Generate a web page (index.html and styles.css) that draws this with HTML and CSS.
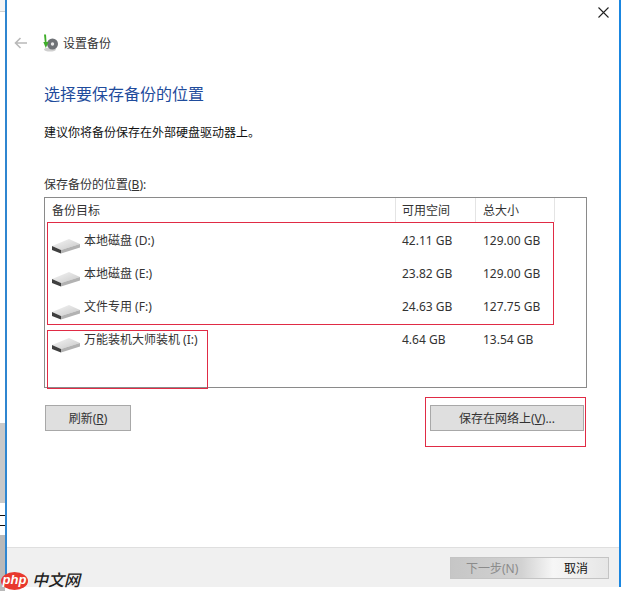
FILE: index.html
```html
<!DOCTYPE html>
<html lang="zh-CN">
<head>
<meta charset="utf-8">
<title>设置备份</title>
<link rel="stylesheet" href="styles.css">
</head>
<body>
<div class="page">
  <div class="strip">
    <div class="strip-a"></div>
    <div class="strip-b"></div>
    <div class="strip-c"></div>
    <div class="strip-d"></div>
    <div class="strip-e"></div>
  </div>
  <div class="window">
    <div class="titlebar">
      <svg class="close" width="11" height="11" viewBox="0 0 11 11"><path d="M.5.5l10 10M10.500.5l-10 10" stroke="#222" stroke-width="1.1" fill="none"/></svg>
    </div>
    <div class="nav">
      <svg class="back" width="14" height="12" viewBox="0 0 14 12"><path d="M13 6H2M6.500 1 1.500 6l5 5" stroke="#b9b9b9" stroke-width="1.600" fill="none"/></svg>
      <svg class="appicon" width="16" height="18" viewBox="0 0 16 18">
        <ellipse cx="7" cy="15.500" rx="6" ry="2" fill="#cfcfcf"/>
        <circle cx="9.500" cy="10" r="5.500" fill="#6f7276"/>
        <circle cx="9.500" cy="10" r="1.700" fill="#e8e8e8"/>
        <path d="M1 .5 3 .5 3.500 8 5.500 8 2.800 14 .3 8 1.800 8z" fill="#3fae2a"/>
      </svg>
      <span class="nav-title">设置备份</span>
    </div>
    <div class="content">
      <h1 class="heading">选择要保存备份的位置</h1>
      <p class="advice">建议你将备份保存在外部硬盘驱动器上。</p>
      <p class="label">保存备份的位置(<u>B</u>):</p>
      <div class="listbox">
        <div class="row head">
          <div class="cell name">备份目标</div>
          <div class="cell free">可用空间</div>
          <div class="cell total">总大小</div>
        </div>
        <div class="row drive">
          <div class="cell name"><svg class="disk" width="30" height="16" viewBox="0 0 30 16"><use href="#disk"/></svg>本地磁盘 (D:)</div>
          <div class="cell free">42.11 GB</div>
          <div class="cell total">129.00 GB</div>
        </div>
        <div class="row drive">
          <div class="cell name"><svg class="disk" width="30" height="16" viewBox="0 0 30 16"><use href="#disk"/></svg>本地磁盘 (E:)</div>
          <div class="cell free">23.82 GB</div>
          <div class="cell total">129.00 GB</div>
        </div>
        <div class="row drive">
          <div class="cell name"><svg class="disk" width="30" height="16" viewBox="0 0 30 16"><use href="#disk"/></svg>文件专用 (F:)</div>
          <div class="cell free">24.63 GB</div>
          <div class="cell total">127.75 GB</div>
        </div>
        <div class="row drive">
          <div class="cell name"><svg class="disk" width="30" height="16" viewBox="0 0 30 16"><use href="#disk"/></svg>万能装机大师装机 (I:)</div>
          <div class="cell free">4.64 GB</div>
          <div class="cell total">13.54 GB</div>
        </div>
        <div class="mark mark-a"></div>
        <div class="mark mark-b"></div>
      </div>
      <div class="actions">
        <button class="btn refresh">刷新(<u>R</u>)</button>
        <div class="net-wrap"><button class="btn network">保存在网络上(<u>V</u>)...</button></div>
      </div>
    </div>
    <div class="footer">
      <div class="foot-btns">
        <span class="next">下一步(N)</span>
        <span class="cancel">取消</span>
      </div>
    </div>
  </div>
  <div class="rightgap"></div>
</div>
<div class="watermark">
  <span class="wm-php">php</span><span class="wm-cn">中文网</span>
</div>
<svg class="defs" width="0" height="0">
  <defs>
    <linearGradient id="diskTop" x1="0" y1="0" x2="1" y2="1"><stop offset="0" stop-color="#f6f6f6"/><stop offset="1" stop-color="#c8c8c8"/></linearGradient>
    <g id="disk">
      <path d="M1 8 18 1 29 6 10 12z" fill="url(#diskTop)"/>
      <path d="M1 8 10 12V15.500L1 12z" fill="#3f3f3f"/>
      <path d="M10 12 29 6V9.500L10 15.500z" fill="#b2b2b2"/>
    </g>
  </defs>
</svg>
</body>
</html>
```
FILE: styles.css
```css
* { box-sizing: border-box; }
html, body { margin: 0; padding: 0; background: #fff; }
body {
  width: 625px;
  height: 591px;
  overflow: hidden;
  position: relative;
  font-family: "Noto Sans", "Noto Sans CJK SC", sans-serif;
  font-size: 12px;
  color: #222;
}
.page { display: flex; height: 591px; }
.strip { width: 5px; display: flex; flex-direction: column; flex: none; }
.strip-a { height: 12px; border-bottom: 1px solid #d0d0d0; background: #f4f4f4; }
.strip-b { height: 411px; background: #fff; }
.strip-c { height: 80px; background: #c9c9c9; }
.strip-d { height: 32px; background: linear-gradient(#fff 0 12px, #111 12px 13px, #fff 13px 22px, #111 22px 23px, #fff 23px); }
.strip-e { flex: 1; background: #b9b9b9; }
.window {
  width: 616px;
  height: 587px;
  flex: none;
  border-left: 2px solid #2f86d0;
  border-right: 2px solid #1a86e0;
  display: flex;
  flex-direction: column;
  background: #fff;
}
.rightgap { flex: 1; }
.titlebar { height: 26px; display: flex; justify-content: flex-end; padding: 7px 10px 0 0; }
.close { display: block; }
.nav { height: 34px; display: flex; align-items: center; padding-left: 7px; padding-bottom: 1px; }
.back { margin-right: 15px; }
.appicon { margin-right: 4px; }
.nav-title { font-size: 12px; color: #333; }
.content { flex: 1; padding: 0 0 0 37px; }
.heading {
  margin: 0;
  padding-top: 23px;
  font-size: 16px;
  font-weight: 400;
  line-height: 23px;
  color: #1f4c9c;
}
.advice { margin: 18px 0 0; line-height: 18px; color: #111; }
.label { margin: 34px 0 0; line-height: 18px; color: #333; }
.listbox {
  position: relative;
  width: 543px;
  height: 191px;
  margin-top: 3px;
  border: 1px solid #8a8a8a;
}
.row { display: grid; grid-template-columns: 351px 80px 79px; }
.cell { padding-left: 7px; display: flex; align-items: center; white-space: pre; }
.cell.free { padding-left: 6px; }
.head { height: 24px; }
.head .cell { height: 24px; border-right: 1px solid #e4e4e4; color: #333; }
.drive { height: 33px; color: #333; }
.drive .cell { padding-top: 3px; height: 33px; }
.disk { margin: 11px 3px 0 -1px; flex: none; }
.mark { position: absolute; border: 1px solid #e02b45; }
.mark-a { left: 2px; top: 24px; width: 507px; height: 103px; }
.mark-b { left: 2px; top: 132px; width: 161px; height: 59px; }
.actions { display: flex; align-items: flex-start; margin-top: 9px; }
.btn {
  font: inherit;
  color: #333;
  background: #dfdfdf;
  border: 1px solid #a8a8a8;
  padding: 0;
  height: 26px;
}
.refresh { width: 86px; margin: 8px 0 0 1px; }
.net-wrap {
  width: 161px;
  height: 50px;
  margin-left: 294px;
  border: 1px solid #e02b45;
  padding: 7px 0 0 4px;
}
.network { width: 154px; }
.footer {
  height: 40px;
  background: #f0f0f0;
  border-top: 1px solid #dfdfdf;
  padding: 9px 0 0 443px;
}
.foot-btns {
  width: 159px;
  height: 22px;
  display: flex;
  justify-content: space-between;
  align-items: center;
  padding: 0 20px 0 15px;
  background: linear-gradient(90deg, #c6c6c6 0, #d2d2d2 45%, #f6f6f6 65%, #e6e6e6 100%);
  border: 1px solid #c4c4c4;
}
.next { color: #8b8b8b; }
.cancel { color: #111; }
.watermark {
  position: absolute;
  left: 1px;
  top: 572px;
  height: 18px;
  display: flex;
  align-items: center;
}
.wm-php {
  width: 27px;
  height: 18px;
  border-radius: 50%;
  background: #e8382e;
  color: #fff;
  font: italic 700 13px/16px "Liberation Sans", sans-serif;
  text-align: center;
  display: block;
}
.wm-cn {
  margin-left: 4px;
  font: italic 500 16px/18px "Liberation Sans", "Noto Sans CJK SC", sans-serif;
  color: #222;
}
.defs { position: absolute; }
```
